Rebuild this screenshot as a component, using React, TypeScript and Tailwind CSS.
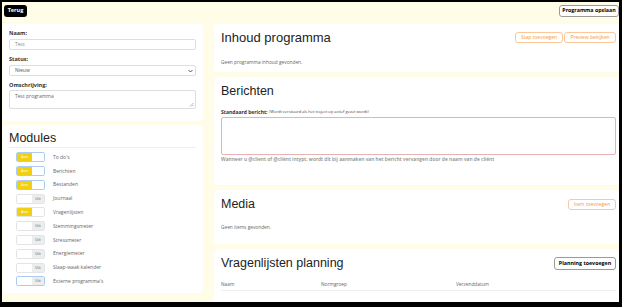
import React from "react";

const sans = { fontFamily: '"Open Sans", "Noto Sans", sans-serif' };
const head = { fontFamily: '"Liberation Sans", Arial, sans-serif' };

function Toggle({ on, focus }: { on: boolean; focus?: boolean }) {
  return (
    <div
      className={`flex h-[10px] w-[29px] overflow-hidden rounded-[2px] border ${
        focus ? "border-[#a9ccf2]" : "border-[#e4e4e4]"
      }`}
    >
      <div
        className={`flex w-[15px] items-center justify-center text-[4px] leading-none ${
          on ? "bg-[#f3cf12] text-white" : "bg-white"
        }`}
      >
        {on ? "Aan" : ""}
      </div>
      <div
        className={`flex flex-1 items-center justify-center text-[4px] leading-none ${
          on ? "bg-white" : "bg-[#ededed] text-[#555]"
        }`}
      >
        {on ? "" : "Uit"}
      </div>
    </div>
  );
}

function OrangeBtn({ children, w }: { children: React.ReactNode; w: string }) {
  return (
    <div
      className={`flex h-[11px] ${w} items-center justify-center rounded-[3px] border border-[#fac89a] bg-white text-[5px] leading-none text-[#f39a44]`}
    >
      {children}
    </div>
  );
}

const modules: { label: string; on: boolean; focus?: boolean }[] = [
  { label: "To do's", on: true, focus: true },
  { label: "Berichten", on: true, focus: true },
  { label: "Bestanden", on: true, focus: true },
  { label: "Journaal", on: false },
  { label: "Vragenlijsten", on: true },
  { label: "Stemmingsmeter", on: false },
  { label: "Stressmeter", on: false },
  { label: "Energiemeter", on: false },
  { label: "Slaap-waak kalender", on: false },
  { label: "Externe programma's", on: false, focus: true },
];

export default function App() {
  return (
    <div
      style={sans}
      className="box-border h-[307px] w-[622px] overflow-hidden border-b-[5px] border-l-2 border-r-[3px] border-t-2 border-black bg-[#fffde7] text-[#333]"
    >
      {/* top bar */}
      <div className="flex items-start justify-between pl-[2px] pt-[3px]">
        <div className="flex h-[12px] w-[23px] items-center justify-center rounded-[3px] bg-black text-[5.5px] font-bold leading-none text-white">
          Terug
        </div>
        <div className="flex h-[12px] w-[60px] items-center justify-center rounded-[3px] border border-[#9a9a9a] bg-white text-[5.3px] font-bold leading-none text-black">
          Programma opslaan
        </div>
      </div>

      <div className="mt-[7px] flex gap-[11px] pl-[1px]">
        {/* left column */}
        <div className="flex w-[200px] flex-col gap-[4px]">
          <div className="flex h-[97px] flex-col rounded-[4px] bg-white px-[6px] pr-[7px] pt-[6px]">
            <div className="h-[7px] text-[5.5px] font-bold leading-[7px] text-[#333]">Naam:</div>
            <div className="mt-[2px] flex h-[11px] items-center rounded-[2px] border border-[#dedede] px-[5px] text-[5px] leading-none text-[#888]">
              Test
            </div>
            <div className="mt-[6px] h-[7px] text-[5.5px] font-bold leading-[7px] text-[#333]">Status:</div>
            <div className="mt-[2px] flex h-[11px] items-center justify-between rounded-[2px] border border-[#dedede] pl-[5px] pr-[2px] text-[5px] leading-none text-[#555]">
              <span>Nieuw</span>
              <svg width="5" height="4" viewBox="0 0 10 8">
                <path d="M1 2 L5 6 L9 2" stroke="#444" strokeWidth="1.8" fill="none" />
              </svg>
            </div>
            <div className="mt-[6px] h-[7px] text-[5.5px] font-bold leading-[7px] text-[#333]">Omschrijving:</div>
            <div className="relative mt-[1px] h-[19px] rounded-[2px] border border-[#dedede] px-[5px] pt-[3px] text-[5px] leading-none text-[#666]">
              Test programma
              <svg className="absolute bottom-[1px] right-[1px]" width="5" height="5" viewBox="0 0 10 10">
                <path d="M9 2 L2 9 M9 6 L6 9" stroke="#888" strokeWidth="1.2" />
              </svg>
            </div>
          </div>

          <div className="flex h-[168px] flex-col rounded-[4px] bg-white px-[6px] pr-[7px] pt-[5px]">
            <div
              style={head}
              className="h-[18px] border-b border-[#eeeeee] text-[12.5px] leading-[16px] text-[#222]"
            >
              Modules
            </div>
            <div className="flex flex-col pl-[7px] pt-[2.4px]">
              {modules.map((m) => (
                <div key={m.label} className="flex h-[13.8px] items-center">
                  <Toggle on={m.on} focus={m.focus} />
                  <span className="ml-[8px] text-[5px] leading-none text-[#666]">{m.label}</span>
                </div>
              ))}
            </div>
          </div>
        </div>

        {/* right column */}
        <div className="flex w-[405px] flex-col gap-[5px]">
          <div className="flex h-[48px] flex-col rounded-[4px] bg-white pl-[7px] pr-[3px] pt-[7px]">
            <div className="flex h-[13px] items-center justify-between">
              <span style={head} className="text-[13px] leading-none text-[#222]">
                Inhoud programma
              </span>
              <div className="flex gap-[1px]">
                <OrangeBtn w="w-[48px]">Stap toevoegen</OrangeBtn>
                <OrangeBtn w="w-[52px]">Preview bekijken</OrangeBtn>
              </div>
            </div>
            <div className="mt-[15px] h-[6px] text-[4.8px] leading-[6px] text-[#666]">
              Geen programma inhoud gevonden.
            </div>
          </div>

          <div className="flex h-[108px] flex-col rounded-[4px] bg-white pl-[7px] pr-[3px] pt-[8px]">
            <div className="flex h-[13px] items-center">
              <span style={head} className="text-[12.5px] leading-none text-[#222]">
                Berichten
              </span>
            </div>
            <div className="mt-[11px] flex h-[6px] items-center gap-[1.5px] text-[#333]">
              <span className="text-[5px] font-bold leading-none">Standaard bericht:</span>
              <span className="text-[4px] leading-none text-[#444]">(Wordt verstuurd als het traject op actief gezet wordt)</span>
            </div>
            <div className="mt-[2px] h-[38px] rounded-[2px] border border-[#e4b2b2]" />
            <div className="mt-[1px] h-[6px] text-[4.95px] font-semibold leading-[6px] text-[#8a8a8a]">
              Wanneer u @client of @cliënt intypt, wordt dit bij aanmaken van het bericht vervangen door de naam van de cliënt
            </div>
          </div>

          <div className="flex h-[54px] flex-col rounded-[4px] bg-white pl-[7px] pr-[3px] pt-[8px]">
            <div className="flex h-[13px] items-center justify-between">
              <span style={head} className="text-[12.5px] leading-none text-[#222]">
                Media
              </span>
              <OrangeBtn w="w-[48px]">Item toevoegen</OrangeBtn>
            </div>
            <div className="mt-[13px] h-[6px] text-[4.8px] leading-[6px] text-[#666]">Geen items gevonden.</div>
          </div>

          <div className="flex h-[60px] flex-col rounded-[4px] bg-white pl-[7px] pr-[3px] pt-[8px]">
            <div className="flex h-[13px] items-center justify-between">
              <span style={head} className="text-[12.5px] leading-none text-[#222]">
                Vragenlijsten planning
              </span>
              <div className="flex h-[13px] w-[62px] items-center justify-center rounded-[3px] border border-[#9a9a9a] bg-white text-[5.3px] font-bold leading-none text-black">
                Planning toevoegen
              </div>
            </div>
            <div className="mt-[11px] grid h-[10px] grid-cols-[100px_135px_1fr] border-b border-[#eeeeee] text-[4.8px] leading-[6px] text-[#666]">
              <span>Naam</span>
              <span>Normgroep</span>
              <span>Verzenddatum</span>
            </div>
          </div>
        </div>
      </div>
    </div>
  );
}
